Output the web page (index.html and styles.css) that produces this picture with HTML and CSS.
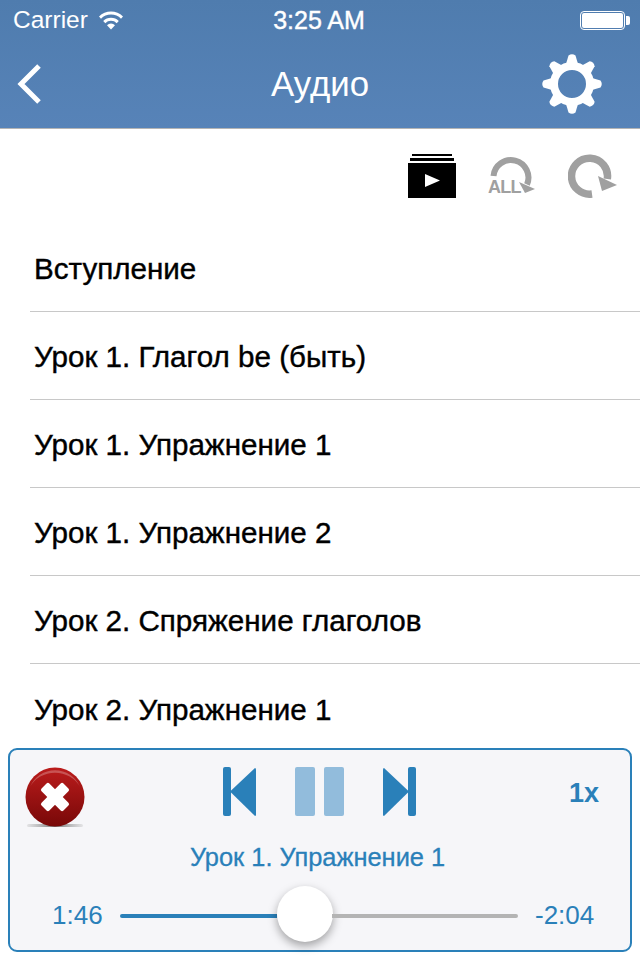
FILE: index.html
```html
<!DOCTYPE html>
<html lang="ru">
<head>
  <meta charset="UTF-8" />
  <meta name="viewport" content="width=device-width, initial-scale=1" />
  <title>Аудио</title>
  <link rel="stylesheet" href="styles.css">
</head>
<body>
  <div class="screen">
    <header class="header">
      <div class="status">
        <div class="status-left">
          <span class="carrier">Carrier</span>
          <svg class="wifi" width="26" height="20" viewBox="0 0 26 20">
            <path d="M1 6.500a17 17 0 0 1 24 0l-2 2.200a14 14 0 0 0-20 0z" fill="#fff"/>
            <path d="M5.200 11a11 11 0 0 1 15.600 0l-2.100 2.200a8 8 0 0 0-11.400 0z" fill="#fff"/>
            <path d="M9 15.200a5.500 5.500 0 0 1 8 0L13 19.500z" fill="#fff"/>
          </svg>
        </div>
        <span class="time">3:25 AM</span>
        <div class="battery"><div class="battery-fill"></div></div>
      </div>
      <div class="navbar">
        <svg class="back" width="30" height="44" viewBox="0 0 30 44">
          <path d="M24 4 6 22l18 18" fill="none" stroke="#fff" stroke-width="5"/>
        </svg>
        <h1 class="title">Аудио</h1>
        <svg class="gear" width="62" height="62" viewBox="-31 -31 62 62">
          <circle r="18" fill="none" stroke="#fff" stroke-width="8"/>
          <g fill="#fff">
            <path d="M-6-20-3.500-28.500Q0-31 3.500-28.500L6-20z"/>
            <path transform="rotate(45)" d="M-6-20-3.500-28.500Q0-31 3.500-28.500L6-20z"/>
            <path transform="rotate(90)" d="M-6-20-3.500-28.500Q0-31 3.500-28.500L6-20z"/>
            <path transform="rotate(135)" d="M-6-20-3.500-28.500Q0-31 3.500-28.500L6-20z"/>
            <path transform="rotate(180)" d="M-6-20-3.500-28.500Q0-31 3.500-28.500L6-20z"/>
            <path transform="rotate(225)" d="M-6-20-3.500-28.500Q0-31 3.500-28.500L6-20z"/>
            <path transform="rotate(270)" d="M-6-20-3.500-28.500Q0-31 3.500-28.500L6-20z"/>
            <path transform="rotate(315)" d="M-6-20-3.500-28.500Q0-31 3.500-28.500L6-20z"/>
          </g>
        </svg>
      </div>
    </header>

    <div class="toolbar">
      <svg width="48" height="44" viewBox="0 0 48 44">
        <rect x="4" y="0" width="40" height="2"/>
        <rect x="2" y="4" width="44" height="3"/>
        <rect x="0" y="9" width="48" height="35"/>
        <path d="M17 20l15 6.500L17 33z" fill="#fff"/>
      </svg>
      <svg width="48" height="44" viewBox="0 0 48 44">
        <path d="M5.500 22A17.500 17.500 0 1 1 39 30.500" fill="none" stroke="#a0a0a0" stroke-width="6"/>
        <path d="M31 28l16 7-10 4z" fill="#a0a0a0"/>
        <text class="all" x="0" y="39">ALL</text>
      </svg>
      <svg width="50" height="44" viewBox="0 0 50 44">
        <path d="M24 40A18 18 0 1 1 39.300 25" fill="none" stroke="#a0a0a0" stroke-width="7.500"/>
        <path d="M30 22l19 9-15 6z" fill="#a0a0a0"/>
      </svg>
    </div>

    <ul class="list">
      <li class="row">Вступление</li>
      <li class="row">Урок 1. Глагол be (быть)</li>
      <li class="row">Урок 1. Упражнение 1</li>
      <li class="row">Урок 1. Упражнение 2</li>
      <li class="row">Урок 2. Спряжение глаголов</li>
      <li class="row">Урок 2. Упражнение 1</li>
    </ul>

    <section class="player">
      <div class="player-top">
        <svg class="close" width="60" height="62" viewBox="0 0 60 62">
          <defs>
            <linearGradient id="red" x1="0" y1="0" x2="0" y2="1">
              <stop offset="0" stop-color="#bb1c1c"/>
              <stop offset="1" stop-color="#780808"/>
            </linearGradient>
            <linearGradient id="floor" x1="0" y1="0" x2="1" y2="0">
              <stop offset="0" stop-color="#999" stop-opacity="0.2"/>
              <stop offset="0.5" stop-color="#777"/>
              <stop offset="1" stop-color="#999" stop-opacity="0.2"/>
            </linearGradient>
          </defs>
          <rect x="2" y="57" width="56" height="3" rx="1.500" fill="url(#floor)"/>
          <circle cx="30" cy="30" r="29.500" fill="url(#red)"/>
          <path d="M5 20A27 27 0 0 1 55 20 28 26 0 0 0 5 20z" fill="#fff" opacity="0.25"/>
          <g fill="#fff" transform="rotate(45 30 30)">
            <rect x="14.500" y="24.500" width="31" height="11" rx="2"/>
            <rect x="24.500" y="14.500" width="11" height="31" rx="2"/>
          </g>
        </svg>
        <div class="controls">
          <svg width="33" height="50" viewBox="0 0 33 50">
            <rect x="0" y="0" width="8" height="49" rx="2" fill="#2a80b9"/>
            <path d="M32 1q1 0 1 1.500v45q0 1.500-1 1.500L7 24.500z" fill="#2a80b9"/>
          </svg>
          <svg class="pause" width="49" height="49" viewBox="0 0 49 49">
            <rect x="0" y="0" width="20" height="49" rx="2"/>
            <rect x="29" y="0" width="20" height="49" rx="2"/>
          </svg>
          <svg width="33" height="50" viewBox="0 0 33 50">
            <rect x="25" y="0" width="8" height="49" rx="2" fill="#2a80b9"/>
            <path d="M1 1q-1 0-1 1.500v45q0 1.500 1 1.500L26 24.500z" fill="#2a80b9"/>
          </svg>
        </div>
        <span class="speed">1x</span>
      </div>
      <div class="track-title">Урок 1. Упражнение 1</div>
      <div class="progress">
        <span class="elapsed">1:46</span>
        <div class="slider">
          <div class="slider-done"></div>
          <div class="slider-thumb"></div>
          <div class="slider-rest"></div>
        </div>
        <span class="remaining">-2:04</span>
      </div>
    </section>
  </div>
</body>
</html>
```

FILE: styles.css
```css
* {
  box-sizing: border-box;
}
body {
  margin: 0;
  font-family: "Liberation Sans", Arial, sans-serif;
  background-color: #fff;
}
.screen {
  position: relative;
  width: 640px;
  height: 960px;
  overflow: hidden;
}
.header {
  height: 129px;
  background: linear-gradient(#4f7cae, #5783b8);
  border-bottom: 1px solid #b4b4b4;
  color: #fff;
}
.status {
  height: 40px;
  padding: 0 15px 0 13px;
  display: grid;
  grid-template-columns: 1fr auto 1fr;
  align-items: center;
  font-size: 24.5px;
}
.status-left {
  display: flex;
  align-items: center;
  gap: 10px;
}
.time {
  font-size: 25px;
  -webkit-text-stroke: 0.4px #fff;
}
.battery {
  justify-self: end;
  width: 45px;
  height: 19px;
  border: 1px solid #fff;
  border-radius: 4px;
  padding: 1px;
  position: relative;
}
.battery::after {
  content: "";
  position: absolute;
  right: -6px;
  top: 4px;
  width: 4px;
  height: 9px;
  border-radius: 0 2px 2px 0;
  background-color: #fff;
}
.battery-fill {
  height: 100%;
  border-radius: 2px;
  background-color: #fff;
}
.navbar {
  height: 88px;
  padding: 0 15px;
  display: grid;
  grid-template-columns: 1fr auto 1fr;
  align-items: center;
}
.title {
  margin: 0;
  font-size: 34.8px;
  font-weight: normal;
}
.gear {
  justify-self: end;
  margin-right: 22px;
}
.toolbar {
  height: 95px;
  padding: 25px 22px 0 0;
  display: flex;
  align-items: flex-start;
  justify-content: flex-end;
  gap: 32px;
}
.all {
  font-size: 18px;
  font-weight: bold;
  letter-spacing: -0.7px;
  fill: #a0a0a0;
}
.list {
  list-style: none;
  margin: 0;
  padding: 0 0 0 30px;
}
.row {
  height: 88px;
  padding: 3px 0 0 4px;
  display: flex;
  align-items: center;
  font-size: 29.6px;
  color: #000;
  -webkit-text-stroke: 0.4px #000;
  border-bottom: 1px solid #c8c8c8;
}
.row:last-child {
  border-bottom: none;
}
.player {
  position: absolute;
  left: 8px;
  top: 748px;
  width: 624px;
  height: 204px;
  padding: 17px 16px 0 15px;
  background-color: #f6f6f9;
  border: 2px solid #2a80b9;
  border-radius: 9px;
  color: #2a80b9;
}
.player-top {
  height: 62px;
  display: grid;
  grid-template-columns: 1fr auto 1fr;
  align-items: start;
}
.controls {
  display: flex;
  gap: 39px;
}
.pause {
  fill: #92bcdc;
}
.speed {
  justify-self: end;
  margin: 11px 15px 0 0;
  font-size: 27px;
  font-weight: bold;
}
.track-title {
  margin-top: 14px;
  padding-right: 4px;
  text-align: center;
  font-size: 25.4px;
  -webkit-text-stroke: 0.3px #2a80b9;
}
.progress {
  margin-top: 14px;
  display: flex;
  align-items: center;
  font-size: 26px;
}
.elapsed {
  margin-left: 27px;
  padding-bottom: 2px;
  width: 68px;
}
.slider {
  width: 398px;
  display: flex;
  align-items: center;
}
.slider-done {
  width: 157px;
  height: 4px;
  border-radius: 2px 0 0 2px;
  background-color: #2a80b9;
}
.slider-thumb {
  flex: none;
  width: 56px;
  height: 56px;
  margin: 0 -1px 4px 0;
  border-radius: 50%;
  background-color: #fff;
  box-shadow: 0 4px 10px rgba(0,0,0,0.35);
}
.slider-rest {
  flex: 1;
  height: 4px;
  border-radius: 0 2px 2px 0;
  background-color: #b4b4b4;
}
.remaining {
  margin-left: 17px;
  padding-bottom: 2px;
}
```
